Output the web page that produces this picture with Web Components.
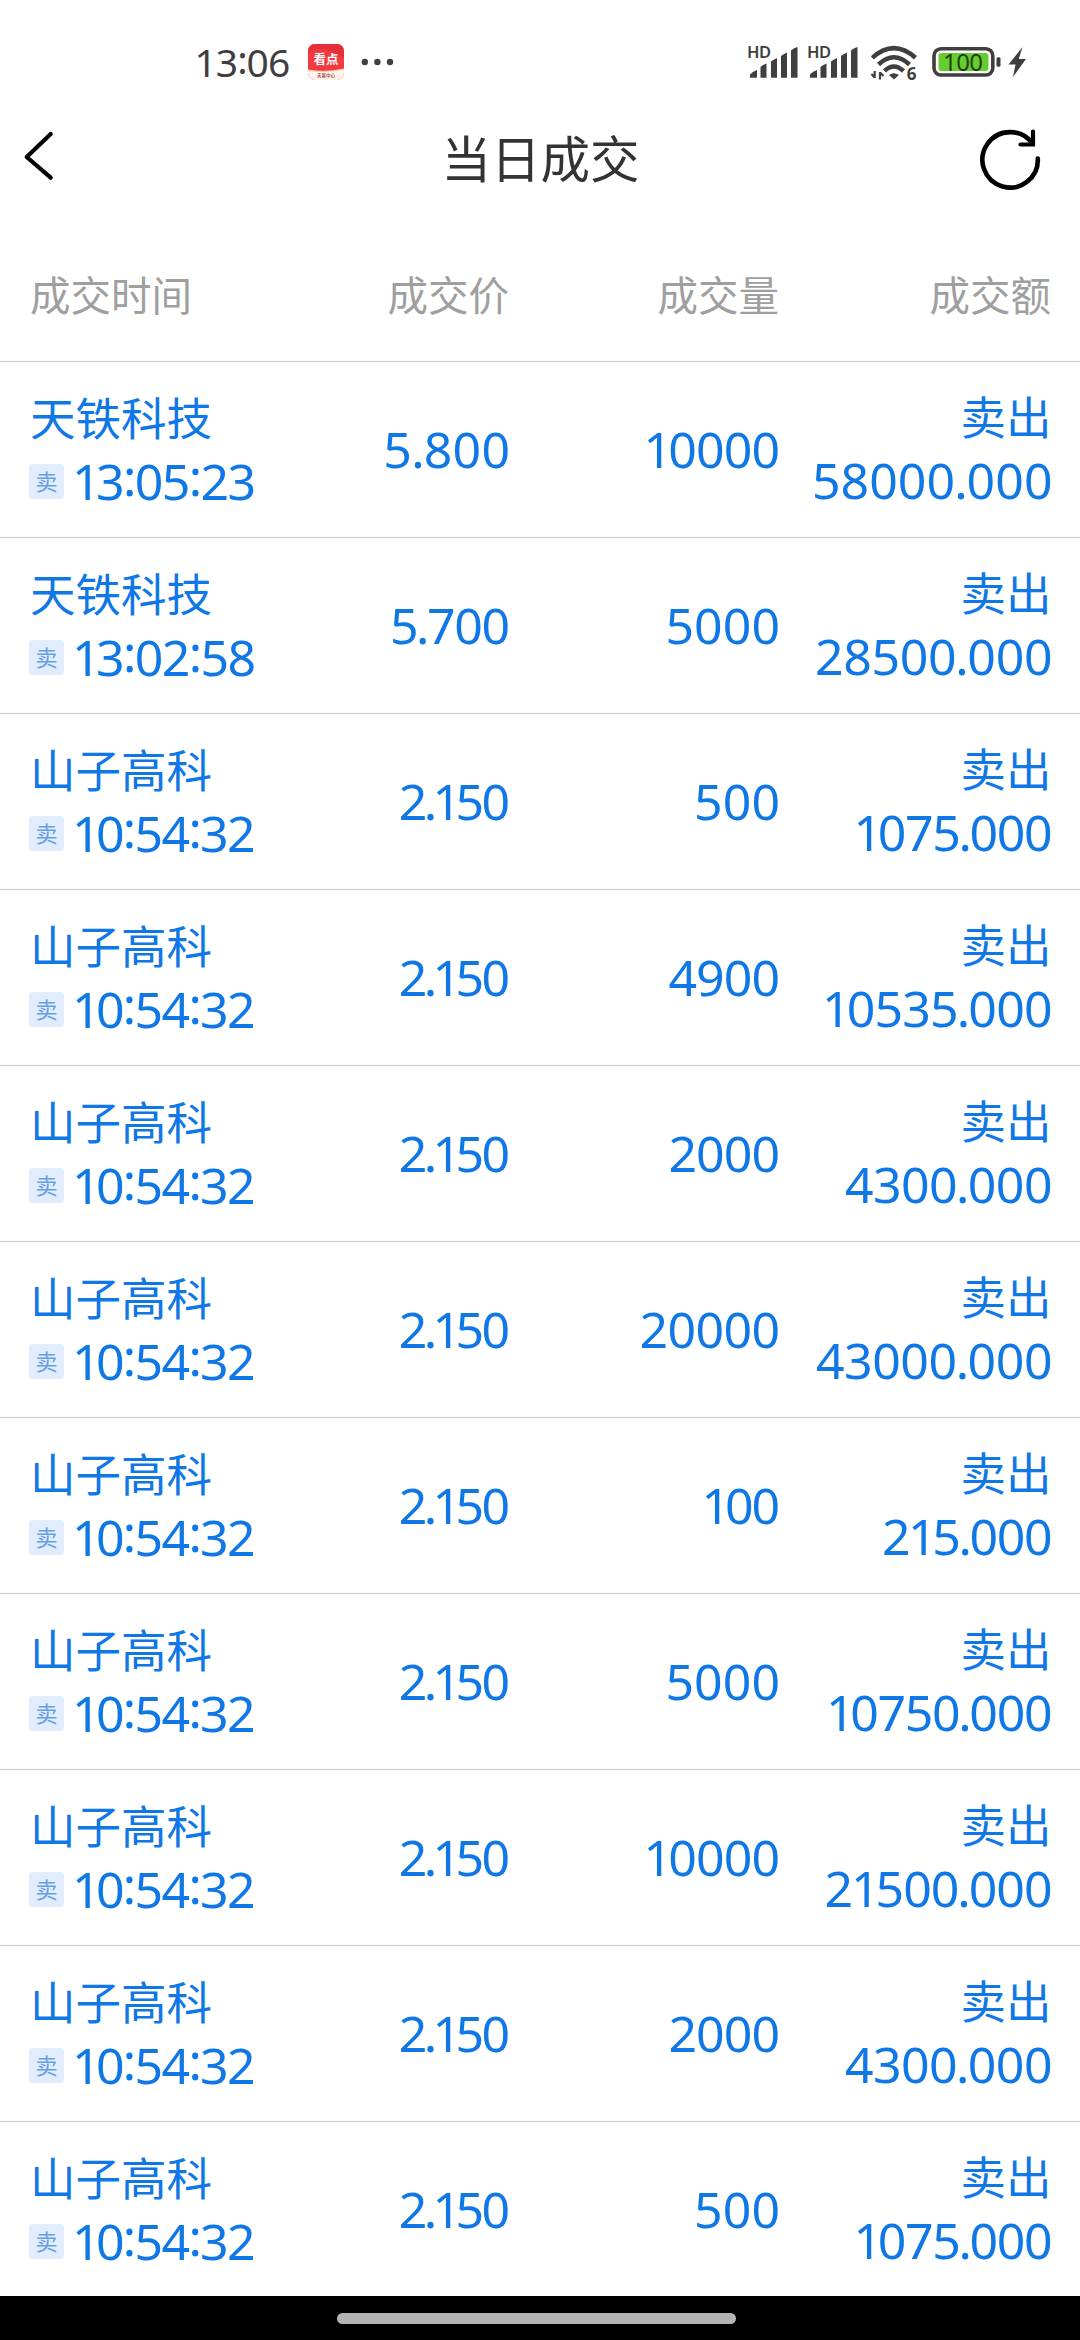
<!DOCTYPE html>
<html lang="zh-CN">
<head>
<meta charset="utf-8">
<title>当日成交</title>
<style>
  body {
    margin: 0;
    background: #fff;
    font-family: Lato, "Noto Sans CJK SC", sans-serif;
  }
</style>
</head>
<body>
<trade-app></trade-app>
<script>
// name, time, price, volume, amount; each figure is followed by its drawn width
const TRADES = [
  ['天铁科技', '13:05:23', 177.5, '5.800', 122, '10000', 131, '58000.000', 236],
  ['天铁科技', '13:02:58', 178.5, '5.700', 115.5, '5000', 110, '28500.000', 234],
  ['山子高科', '10:54:32', 177, '2.150', 107.5, '500', 81.5, '1075.000', 193.5],
  ['山子高科', '10:54:32', 177, '2.150', 107.5, '4900', 109, '10535.000', 225],
  ['山子高科', '10:54:32', 177, '2.150', 107.5, '2000', 108, '4300.000', 205],
  ['山子高科', '10:54:32', 177, '2.150', 107.5, '20000', 137, '43000.000', 234],
  ['山子高科', '10:54:32', 177, '2.150', 107.5, '100', 73, '215.000', 167],
  ['山子高科', '10:54:32', 177, '2.150', 107.5, '5000', 110, '10750.000', 221],
  ['山子高科', '10:54:32', 177, '2.150', 107.5, '10000', 131, '21500.000', 224.5],
  ['山子高科', '10:54:32', 177, '2.150', 107.5, '2000', 108, '4300.000', 205],
  ['山子高科', '10:54:32', 177, '2.150', 107.5, '500', 81.5, '1075.000', 193.5]
];

// space taken off before and after the narrow glyphs
const TRIM = {
  '1': [1, 3],
  '.': [1, 1],
  ':': [0, 0]
};

const pen = document.createElement('canvas').getContext('2d');
pen.fontKerning = 'none';

class FigureText extends HTMLElement {
  connectedCallback() {
    const value = this.getAttribute('value');
    const width = Number(this.getAttribute('width'));
    const chars = [...value];
    pen.font = '50px "Noto Sans"';
    const m = pen.measureText(value);
    let ink = m.actualBoundingBoxRight + m.actualBoundingBoxLeft;
    chars.forEach((c, i) => {
      if (TRIM[c]) ink -= (i ? TRIM[c][0] : 0) + TRIM[c][1];
    });
    const spacing = (width - ink) / (chars.length - 1);
    const html = chars.map((c, i) => {
      if (!TRIM[c]) return c;
      const before = i ? TRIM[c][0] : 0;
      const lift = c === ':' ? 'position:relative;top:-4px;' : '';
      return `<span style="${lift}margin-left:${-before}px;margin-right:${-TRIM[c][1]}px">${c}</span>`;
    }).join('');
    this.attachShadow({mode: 'open'}).innerHTML = `
      <style>
        :host {
          display: block;
          font: 50px/60px "Noto Sans", sans-serif;
          font-kerning: none;
          white-space: nowrap;
        }
        div {
          letter-spacing: ${spacing.toFixed(3)}px;
          margin-right: ${(-spacing).toFixed(3)}px;
        }
      </style>
      <div>${html}</div>
    `;
  }
}
customElements.define('figure-text', FigureText);

class SideBadge extends HTMLElement {
  connectedCallback() {
    this.attachShadow({mode: 'open'}).innerHTML = `
      <style>
        :host {
          display: block;
          width: 35px;
          height: 35px;
          border-radius: 3px;
          background: #e1edfd;
          color: #659fe6;
          font-size: 22px;
          line-height: 35px;
          text-align: center;
        }
      </style>
      <slot></slot>
    `;
  }
}
customElements.define('side-badge', SideBadge);

class StatusBar extends HTMLElement {
  connectedCallback() {
    const signal = x => `
      <g transform="translate(${x} 0)">
        <text x="-1" y="28" font-size="16.5" font-weight="600" textLength="24">HD</text>
        <path d="M2 47.7V44.5q3-3.5 7-4.5v7.7zM12.5 47.7V37q3-2.5 6-3.5v14.2zM23 47.7V31.5q3-2.5 6-3.5v19.7zM33 47.7V26q3-2.5 6-3.5v25.2zM43 47.7V20.5q3-3 6.5-3.5v30.7z"/>
      </g>`;
    this.attachShadow({mode: 'open'}).innerHTML = `
      <style>
        :host {
          display: flex;
          align-items: flex-start;
          height: 110px;
          color: #3f3f3f;
          font-family: "Noto Sans", sans-serif;
        }
        .clock {
          margin-left: 194.5px;
          width: 111.5px;
          font-size: 39px;
          line-height: 48px;
          padding-top: 38px;
          letter-spacing: -1px;
        }
        .clock span {
          position: relative;
          top: -3px;
        }
        .notes {
          padding-top: 42px;
        }
        .icons {
          margin-left: auto;
          margin-right: 39px;
          padding-top: 30px;
        }
        svg {
          display: block;
        }
      </style>
      <div class="clock">13<span>:</span>06</div>
      <div class="notes">
        <svg width="92" height="42" viewBox="0 0 92 42">
          <defs>
            <clipPath id="app"><rect x="2" y="2" width="36" height="36" rx="7"/></clipPath>
          </defs>
          <g clip-path="url(#app)">
            <rect x="2" y="2" width="36" height="36" fill="#f33a40"/>
            <path d="M2 10Q16 2 38 16V2H2z" fill="#e62e38"/>
            <path d="M2 28Q20 31 38 27V38H2z" fill="#fff4ee"/>
            <path d="M2 28Q20 31 38 27" fill="none" stroke="#f8cd9e" stroke-width="1.2"/>
          </g>
          <text x="20" y="22" font-size="12.5" font-weight="700" fill="#fff" text-anchor="middle" font-family="Noto Sans CJK SC">看点</text>
          <text x="20" y="35" font-size="4.5" font-weight="700" fill="#a6555b" text-anchor="middle" font-family="Noto Sans CJK SC">天容中心</text>
          <g fill="#3f3f3f"><circle cx="58.8" cy="20" r="3.2"/><circle cx="71.4" cy="20" r="3.2"/><circle cx="84" cy="20" r="3.2"/></g>
        </svg>
      </div>
      <div class="icons">
        <svg width="310" height="60" viewBox="0 0 310 60" fill="#3f3f3f">
          ${signal(17)}
          ${signal(77)}
          <g fill="none" stroke="#3f3f3f" stroke-width="4.5">
            <path d="M141.3 27.8Q162.8 8.5 184.5 27.8"/>
            <path d="M147.5 34.5Q162.8 20 178.5 34.5"/>
            <path d="M153.5 41Q162.8 32 172.5 41"/>
          </g>
          <path d="M158 45Q162.8 41.5 168 45L163 49.5z"/>
          <path d="M143.7 41V48M140.5 44L143.7 47.5M149 49.5V42M149 42.5L152.5 46" fill="none" stroke="#3f3f3f" stroke-width="2.2"/>
          <text x="175.800" y="49.700" font-size="17" font-weight="700">6</text>
          <rect x="203" y="18.800" width="58.800" height="26.200" rx="7" fill="#fff" stroke="#3f3f3f" stroke-width="3.600"/>
          <rect x="207.500" y="23" width="50" height="18" rx="3" fill="#67cc2f"/>
          <text x="232" y="40.500" font-size="24" fill="#1f420f" text-anchor="middle" textLength="40">100</text>
          <rect x="265.500" y="27.300" width="4" height="9.500" rx="1.500"/>
          <path d="M291.500 17L277.500 34.500H284.500L282 47L295 29H287.800z"/>
        </svg>
      </div>
    `;
  }
}
customElements.define('status-bar', StatusBar);

class NavBar extends HTMLElement {
  connectedCallback() {
    this.attachShadow({mode: 'open'}).innerHTML = `
      <style>
        :host {
          display: grid;
          grid-template-columns: 130px 1fr 129px;
          height: 100px;
          color: #333;
          font-size: 49.5px;
          line-height: 99px;
          text-align: center;
        }
        svg {
          display: block;
          fill: none;
          stroke: #000;
          stroke-width: 4.2;
          stroke-linecap: round;
          stroke-linejoin: round;
        }
      </style>
      <svg width="130" height="100"><path d="M50.7 24L26.7 47L50.7 67.7"/></svg>
      <slot></slot>
      <svg width="129" height="100">
        <path d="M86.8 48.5A27.7 27.7 0 1 1 81.5 33.5" stroke-width="4.6"/>
        <path d="M82 21.5V34.5H69.5" stroke-linejoin="miter"/>
      </svg>
    `;
  }
}
customElements.define('nav-bar', NavBar);

class TradeHead extends HTMLElement {
  connectedCallback() {
    this.attachShadow({mode: 'open'}).innerHTML = `
      <style>
        :host {
          display: grid;
          grid-template-columns: 239px 240px 270px 272px;
          box-sizing: border-box;
          height: 152px;
          padding: 56px 0 0 30px;
          border-bottom: 1px solid #c8c8c8;
          color: #9f9f9f;
          font-size: 40.5px;
          line-height: 60px;
          text-align: right;
        }
        .first {
          text-align: left;
        }
      </style>
      <div class="first">成交时间</div>
      <div>成交价</div>
      <div>成交量</div>
      <div>成交额</div>
    `;
  }
}
customElements.define('trade-head', TradeHead);

class TradeRow extends HTMLElement {
  set trade([name, time, timeW, price, priceW, volume, volumeW, amount, amountW]) {
    this.attachShadow({mode: 'open'}).innerHTML = `
      <style>
        :host {
          display: grid;
          grid-template-columns: 240px 240px 270px 271.5px;
          box-sizing: border-box;
          height: 176px;
          padding-left: 30px;
          border-bottom: 1px solid #c8c8c8;
          color: #0f77e6;
          font-size: 45.5px;
          line-height: 64px;
        }
        .stock {
          padding-top: 25px;
        }
        .time {
          display: flex;
          align-items: center;
          gap: 8px;
          margin-left: -1px;
        }
        side-badge {
          margin-top: 1px;
        }
        .figure {
          align-self: center;
          padding-bottom: 2px;
        }
        .figure, .amount {
          display: flex;
          flex-direction: column;
          align-items: flex-end;
        }
        .amount {
          padding-top: 24px;
        }
        .amount figure-text {
          margin-right: -1px;
        }
      </style>
      <div class="stock">
        ${name}
        <div class="time"><side-badge>卖</side-badge><figure-text value="${time}" width="${timeW}"></figure-text></div>
      </div>
      <div class="figure"><figure-text value="${price}" width="${priceW}"></figure-text></div>
      <div class="figure"><figure-text value="${volume}" width="${volumeW}"></figure-text></div>
      <div class="amount">卖出<figure-text value="${amount}" width="${amountW}"></figure-text></div>
    `;
  }
}
customElements.define('trade-row', TradeRow);

class GestureBar extends HTMLElement {
  connectedCallback() {
    this.attachShadow({mode: 'open'}).innerHTML = `
      <style>
        :host {
          display: flex;
          justify-content: center;
          box-sizing: border-box;
          height: 44px;
          padding-top: 17px;
          background: #000;
        }
        div {
          width: 399px;
          height: 11px;
          margin-right: 7px;
          border-radius: 6px;
          background: #b3b3b3;
        }
      </style>
      <div></div>
    `;
  }
}
customElements.define('gesture-bar', GestureBar);

class TradeApp extends HTMLElement {
  connectedCallback() {
    const shadow = this.attachShadow({mode: 'open'});
    shadow.innerHTML = `
      <style>
        :host {
          display: flex;
          flex-direction: column;
          height: 2340px;
          width: 1080px;
          overflow: hidden;
        }
        main {
          height: 1934px;
          overflow: hidden;
        }
      </style>
      <status-bar></status-bar>
      <nav-bar>当日成交</nav-bar>
      <trade-head></trade-head>
      <main></main>
      <gesture-bar></gesture-bar>
    `;
    const main = shadow.querySelector('main');
    TRADES.forEach(data => {
      const row = document.createElement('trade-row');
      row.trade = data;
      main.appendChild(row);
    });
  }
}
customElements.define('trade-app', TradeApp);
</script>
</body>
</html>
